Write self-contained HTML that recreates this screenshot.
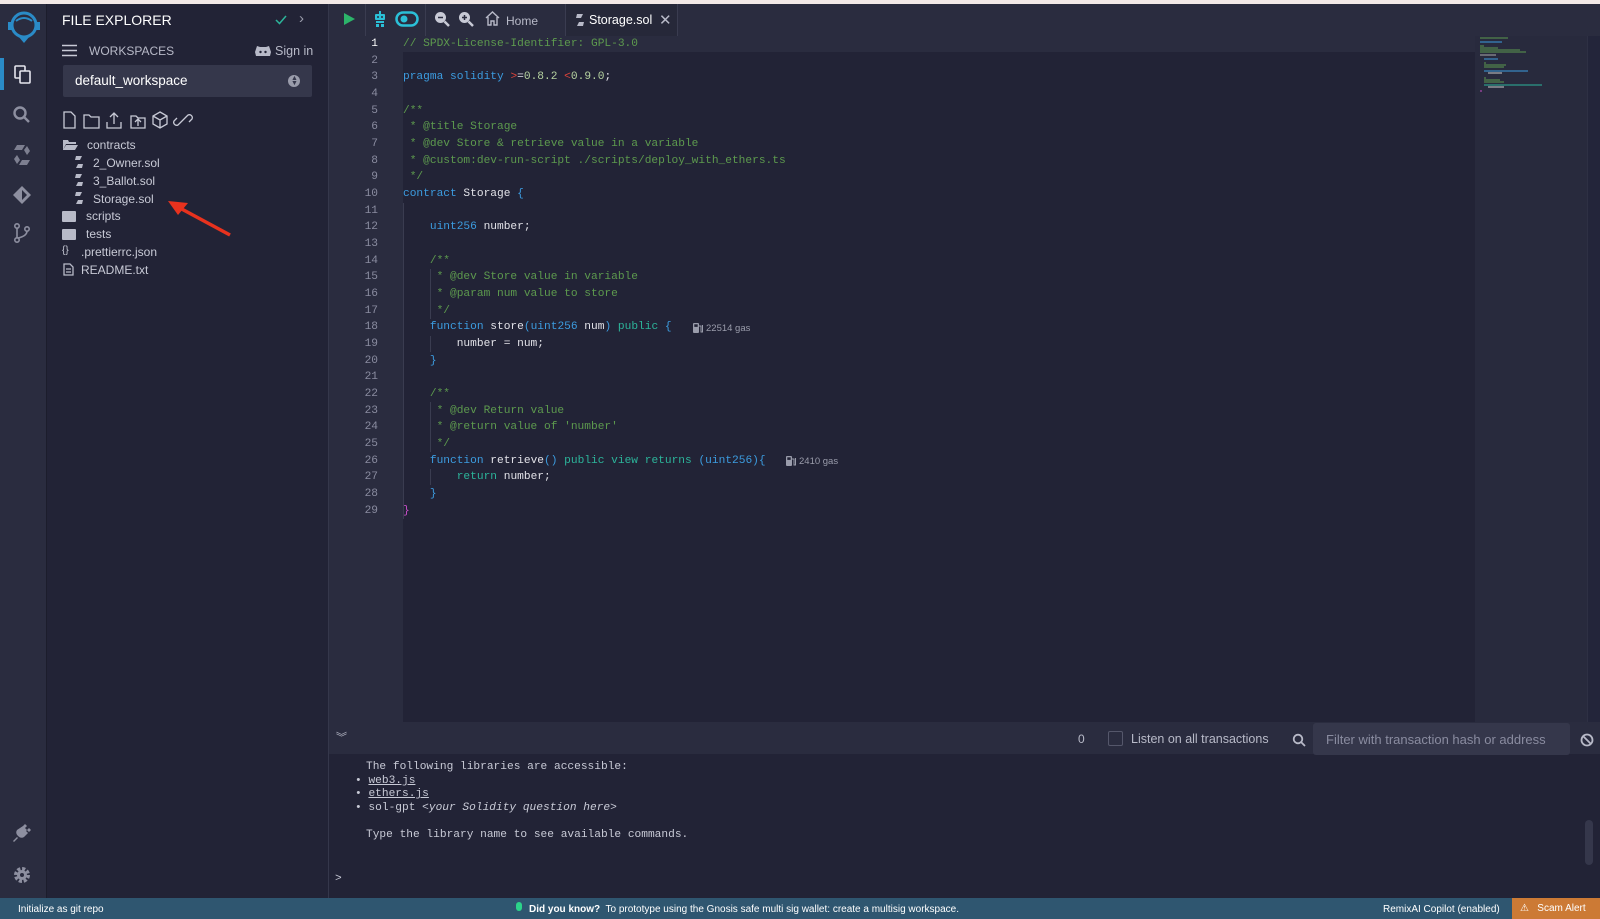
<!DOCTYPE html>
<html><head><meta charset="utf-8"><style>
*{margin:0;padding:0;box-sizing:border-box}
body{width:1600px;height:919px;overflow:hidden;background:#222336;font-family:"Liberation Sans",sans-serif;color:#c8cad6;position:relative}
.a{position:absolute}
.topb{left:0;top:0;width:1600px;height:4px;background:#f3e9e7}
.ib{left:0;top:4px;width:47px;height:894px;background:#2a2c3f;border-right:1px solid #1c1d2c}
.sp{left:47px;top:4px;width:282px;height:894px;background:#222336;border-right:1px solid #35374b}
.tb{left:329px;top:4px;width:1271px;height:32px;background:#2a2c3f}
.gut{left:329px;top:36px;width:74px;height:686px;background:#2a2c3f}
.ln{position:absolute;left:329px;width:49px;text-align:right;font-size:11.2px;color:#8a8ca0;font-family:"Liberation Mono",monospace;line-height:16.67px}
.cl{position:absolute;left:403px;font-size:11.2px;font-family:"Liberation Mono",monospace;line-height:16.67px;white-space:pre;color:#e2e2e8}
.c{color:#5d9a4e}.k{color:#3c9ce0}.g{color:#2cb49a}.n{color:#b6d3a0}.r{color:#e0443a}.m{color:#c84fc8}
.gas{font-family:"Liberation Sans",sans-serif;font-size:9.5px;color:#9a9cab}
.tree{position:absolute;font-size:12px;color:#c8cad6}
.term{left:329px;top:722px;width:1271px;height:32px;background:#2a2c3f}
.tt{position:absolute;left:366px;font-size:11.2px;font-family:"Liberation Mono",monospace;color:#c8cad6;white-space:pre}
.sb{left:0;top:898px;width:1600px;height:21px;background:#2f5670;font-size:10px;color:#fff}
</style></head><body>
<div class="a topb"></div>
<div class="a ib"></div>
<div class="a sp"></div>
<div class="a tb"></div>
<div class="a gut"></div>
<div class="a" style="left:403px;top:36px;width:1072px;height:16px;background:#2a2c3f"></div>
<div class="a" style="left:1475px;top:36px;width:112px;height:686px;background:#282a3d"></div>
<div class="a" style="left:1587px;top:36px;width:13px;height:686px;background:#23253a;border-left:1px solid #2e3044"></div>
<svg class="a" style="left:1478px;top:36px" width="100" height="60">
<g stroke-width="1">
<line x1="2" y1="2" x2="30" y2="2" stroke="#5d9a4e"/><line x1="2" y1="6" x2="24" y2="6" stroke="#3c9ce0"/>
<line x1="2" y1="10" x2="6" y2="10" stroke="#5d9a4e"/><line x1="2" y1="12" x2="20" y2="12" stroke="#5d9a4e"/><line x1="2" y1="14" x2="42" y2="14" stroke="#5d9a4e"/><line x1="2" y1="16" x2="48" y2="16" stroke="#5d9a4e"/>
<line x1="2" y1="19" x2="18" y2="19" stroke="#aaa"/><line x1="6" y1="23" x2="20" y2="23" stroke="#3c9ce0"/>
<line x1="6" y1="27" x2="8" y2="27" stroke="#5d9a4e"/><line x1="6" y1="29" x2="28" y2="29" stroke="#5d9a4e"/><line x1="6" y1="31" x2="26" y2="31" stroke="#5d9a4e"/>
<line x1="6" y1="35" x2="50" y2="35" stroke="#3c9ce0"/><line x1="10" y1="37" x2="24" y2="37" stroke="#ccc"/>
<line x1="6" y1="42" x2="8" y2="42" stroke="#5d9a4e"/><line x1="6" y1="44" x2="22" y2="44" stroke="#5d9a4e"/><line x1="6" y1="46" x2="26" y2="46" stroke="#5d9a4e"/>
<line x1="6" y1="49" x2="64" y2="49" stroke="#2cb49a"/><line x1="10" y1="51" x2="26" y2="51" stroke="#ccc"/><line x1="2" y1="55" x2="4" y2="55" stroke="#c84fc8"/>
</g></svg>

<svg class="a" style="left:4px;top:8px" width="40" height="40" viewBox="0 0 40 40">
<circle cx="20" cy="17" r="12" fill="none" stroke="#2a8bc7" stroke-width="3"/>
<path d="M6 14 v8 M34 14 v8" stroke="#2a8bc7" stroke-width="4"/>
<path d="M14 28 L20 35 L26 28 Z" fill="#2a8bc7"/>
<path d="M12 13 q8 -6 16 0" stroke="#2a8bc7" stroke-width="2" fill="none"/>
</svg>
<div class="a" style="left:0;top:58px;width:4px;height:32px;background:#2a8bc7"></div>
<svg class="a" style="left:12px;top:63px" width="22" height="22" viewBox="0 0 22 22" fill="none" stroke="#e6e6ee" stroke-width="1.6">
<rect x="3" y="3" width="10" height="12" rx="1"/><rect x="8" y="8" width="10" height="12" rx="1" fill="#2a2c3f"/></svg>
<svg class="a" style="left:12px;top:105px" width="20" height="20" viewBox="0 0 20 20" fill="none" stroke="#8d8fa0" stroke-width="2.4"><circle cx="8" cy="8" r="5.5"/><path d="M12 12 L17 17"/></svg>
<svg class="a" style="left:13px;top:144px" width="18" height="22" viewBox="0 0 18 22" fill="#7d7f90"><path d="M4 1 h8 l-3 5 h-8 z M14 2 l3 5 l-3 4 l-3 -5 z M4 20 l-3 -5 l3 -4 l3 5 z M14 21 h-8 l3 -5 h8 z"/></svg>
<svg class="a" style="left:11px;top:184px" width="22" height="22" viewBox="0 0 22 22" fill="#8d8fa0"><path d="M11 2 L20 11 L11 20 L2 11 Z"/><path d="M11 6 L16 11 L11 16 Z" fill="#2a2c3f"/></svg>
<svg class="a" style="left:12px;top:222px" width="20" height="22" viewBox="0 0 20 22" fill="none" stroke="#8d8fa0" stroke-width="1.6"><circle cx="5" cy="4" r="2.2"/><circle cx="5" cy="18" r="2.2"/><circle cx="15" cy="7" r="2.2"/><path d="M5 6 v10 M15 9 q0 5 -9 7"/></svg>
<svg class="a" style="left:11px;top:822px" width="22" height="22" viewBox="0 0 22 22" fill="#8d8fa0"><path d="M12 4 l6 6 l-5 5 q-3 2 -6 -1 q-3 -3 -1 -6 z M14 2 l2 2 l-3 3 l-2 -2 z M20 8 l-2 -2 l-3 3 l2 2 z M6 15 l-4 4 l1 1 l4 -4z"/></svg>
<svg class="a" style="left:12px;top:865px" width="20" height="20" viewBox="0 0 20 20"><circle cx="10" cy="10" r="6" fill="none" stroke="#8d8fa0" stroke-width="4" stroke-dasharray="3 1.7"/><circle cx="10" cy="10" r="5" fill="#8d8fa0"/><circle cx="10" cy="10" r="2" fill="#2a2c3f"/></svg>

<div class="a" style="left:62px;top:12px;font-size:14px;color:#fff">FILE EXPLORER</div>
<svg class="a" style="left:275px;top:14px" width="12" height="12" viewBox="0 0 12 12" fill="none" stroke="#2cb49a" stroke-width="1.5"><path d="M1 6 l3.5 3.5 L11 2"/></svg>
<div class="a" style="left:299px;top:10px;font-size:15px;color:#9a9cab">›</div>
<svg class="a" style="left:62px;top:44px" width="16" height="13"><path d="M0 1.5 h15 M0 6.5 h15 M0 11.5 h15" stroke="#c8cad6" stroke-width="1.6"/></svg>
<div class="a" style="left:89px;top:44px;font-size:12px;color:#b8bac8">WORKSPACES</div>
<svg class="a" style="left:255px;top:45px" width="16" height="12" viewBox="0 0 16 12"><path d="M2 1 l3 1 h6 l3 -1 l2 6 l-1 4 h-14 l-1 -4 z" fill="#b8bac8"/><circle cx="5.5" cy="7" r="1.2" fill="#222336"/><circle cx="10.5" cy="7" r="1.2" fill="#222336"/></svg>
<div class="a" style="left:275px;top:44px;font-size:12.5px;color:#b8bac8">Sign in</div>
<div class="a" style="left:63px;top:65px;width:249px;height:32px;background:#35374b;border-radius:2px"></div>
<div class="a" style="left:75px;top:73px;font-size:13.5px;color:#fff">default_workspace</div>
<div class="a" style="left:288px;top:75px;width:12px;height:12px;border-radius:6px;background:#9a9cab"></div>
<div class="a" style="left:291px;top:76px;font-size:7px;color:#35374b;line-height:5px">▲<br>▼</div>
<svg class="a" style="left:62px;top:110px" width="140" height="20" viewBox="0 0 140 20" fill="none" stroke="#c8cad6" stroke-width="1.3">
<path d="M2 2 h7 l4 4 v12 h-11 z"/>
<path d="M22 5 h5 l2 2 h8 v11 h-15 z"/>
<path d="M45 12 v6 h14 v-6 M52 3 v11 M48 7 l4 -4 l4 4"/>
<path d="M69 6 h5 l2 2 h7 v10 h-14 z M76 16 v-6 M73 12 l3 -3 l3 3"/>
<path d="M98 2 l7 4 v8 l-7 4 l-7 -4 v-8 z M91 6 l7 4 l7 -4 M98 10 v8"/>
<path d="M119 12 l-3 3 a3 3 0 0 1 -4 -4 l3 -3 M123 8 l3 -3 a3 3 0 0 1 4 4 l-3 3 M118 13 l7 -7"/>
</svg>
<svg class="a" style="left:62px;top:139px" width="16" height="12"><path d="M1 1 h5 l1 2 h7 v2 h-10 l-3 6 z M4 6 h12 l-3 5 h-12 z" fill="#b8bac8"/></svg>
<div class="tree" style="left:87px;top:138px">contracts</div>
<svg class="a" style="left:75px;top:156px" width="8" height="12" viewBox="0 0 8 12" fill="#b8bac8"><path d="M1 0 h6 l-2 4 h-5 z M7 12 h-6 l2 -4 h5 z"/></svg><div class="tree" style="left:93px;top:156px">2_Owner.sol</div>
<svg class="a" style="left:75px;top:174px" width="8" height="12" viewBox="0 0 8 12" fill="#b8bac8"><path d="M1 0 h6 l-2 4 h-5 z M7 12 h-6 l2 -4 h5 z"/></svg><div class="tree" style="left:93px;top:174px">3_Ballot.sol</div>
<svg class="a" style="left:75px;top:192px" width="8" height="12" viewBox="0 0 8 12" fill="#b8bac8"><path d="M1 0 h6 l-2 4 h-5 z M7 12 h-6 l2 -4 h5 z"/></svg><div class="tree" style="left:93px;top:192px">Storage.sol</div>
<div class="a" style="left:62px;top:211px;width:14px;height:11px;background:#b8bac8;border-radius:1px"></div><div class="tree" style="left:86px;top:209px">scripts</div>
<div class="a" style="left:62px;top:229px;width:14px;height:11px;background:#b8bac8;border-radius:1px"></div><div class="tree" style="left:86px;top:227px">tests</div>
<div class="tree" style="left:62px;top:245px;font-size:10px">{}</div><div class="tree" style="left:81px;top:245px">.prettierrc.json</div>
<svg class="a" style="left:63px;top:263px" width="11" height="13" fill="none" stroke="#b8bac8" stroke-width="1.3"><path d="M1 1 h6 l3 3 v8 h-9 z M3 6 h5 M3 9 h5"/></svg>
<div class="tree" style="left:81px;top:263px">README.txt</div>
<svg class="a" style="left:160px;top:195px" width="80" height="45"><path d="M70 40 L18 12" stroke="#e8321e" stroke-width="3.5"/><path d="M8 6 L28 8 L18 20 Z" fill="#e8321e"/></svg>

<div class="a" style="left:365px;top:4px;width:1px;height:32px;background:#3a3c50"></div>
<div class="a" style="left:425px;top:4px;width:1px;height:32px;background:#3a3c50"></div>
<div class="a" style="left:565px;top:4px;width:113px;height:32px;background:#262839;border-left:1px solid #3a3c50;border-right:1px solid #3a3c50"></div>
<svg class="a" style="left:343px;top:12px" width="13" height="14"><path d="M1 1 L12 7 L1 13 Z" fill="#2cb46a"/></svg>
<svg class="a" style="left:372px;top:11px" width="16" height="16" viewBox="0 0 16 16" fill="#2bc0d8"><rect x="3" y="3" width="10" height="6" rx="1"/><rect x="7" y="0" width="2" height="3"/><rect x="4" y="10" width="8" height="2"/><rect x="4" y="13" width="3" height="3"/><rect x="9" y="13" width="3" height="3"/><circle cx="6" cy="6" r="1" fill="#2a2c3f"/><circle cx="10" cy="6" r="1" fill="#2a2c3f"/></svg>
<svg class="a" style="left:395px;top:11px" width="24" height="16"><rect x="1.5" y="1.5" width="21" height="13" rx="6.5" fill="none" stroke="#2bc0d8" stroke-width="2.5"/><circle cx="9" cy="8" r="3.5" fill="#2bc0d8"/></svg>
<svg class="a" style="left:434px;top:11px" width="16" height="16" viewBox="0 0 16 16"><circle cx="6.5" cy="6.5" r="5.5" fill="#c8cad6"/><path d="M10.5 10.5 L15 15" stroke="#c8cad6" stroke-width="2.5"/><path d="M4 6.5 h5" stroke="#2a2c3f" stroke-width="1.5"/></svg>
<svg class="a" style="left:458px;top:11px" width="16" height="16" viewBox="0 0 16 16"><circle cx="6.5" cy="6.5" r="5.5" fill="#c8cad6"/><path d="M10.5 10.5 L15 15" stroke="#c8cad6" stroke-width="2.5"/><path d="M4 6.5 h5 M6.5 4 v5" stroke="#2a2c3f" stroke-width="1.5"/></svg>
<svg class="a" style="left:485px;top:11px" width="15" height="15" viewBox="0 0 15 15" fill="none" stroke="#b8bac8" stroke-width="1.4"><path d="M1 7 L7.5 1 L14 7 M3 6 v8 h3 v-4 h3 v4 h3 v-8"/></svg>
<div class="a" style="left:506px;top:14px;font-size:12px;color:#b8bac8">Home</div>
<svg class="a" style="left:576px;top:14px" width="8" height="12" viewBox="0 0 8 12" fill="#b8bac8"><path d="M1 0 h6 l-2 4 h-5 z M7 12 h-6 l2 -4 h5 z"/></svg>
<div class="a" style="left:589px;top:13px;font-size:12.5px;color:#fff">Storage.sol</div>
<div class="a" style="left:659px;top:11px;font-size:15px;color:#b8bac8">✕</div>

<div class="ln" style="top:36px;color:#fff">1</div><div class="ln" style="top:52.7px">2</div><div class="ln" style="top:69.3px">3</div><div class="ln" style="top:86px">4</div><div class="ln" style="top:102.7px">5</div><div class="ln" style="top:119.3px">6</div><div class="ln" style="top:136px">7</div><div class="ln" style="top:152.7px">8</div><div class="ln" style="top:169.3px">9</div><div class="ln" style="top:186px">10</div><div class="ln" style="top:202.7px">11</div><div class="ln" style="top:219.3px">12</div><div class="ln" style="top:236px">13</div><div class="ln" style="top:252.7px">14</div><div class="ln" style="top:269.3px">15</div><div class="ln" style="top:286px">16</div><div class="ln" style="top:302.7px">17</div><div class="ln" style="top:319.3px">18</div><div class="ln" style="top:336px">19</div><div class="ln" style="top:352.7px">20</div><div class="ln" style="top:369.3px">21</div><div class="ln" style="top:386px">22</div><div class="ln" style="top:402.7px">23</div><div class="ln" style="top:419.3px">24</div><div class="ln" style="top:436px">25</div><div class="ln" style="top:452.7px">26</div><div class="ln" style="top:469.3px">27</div><div class="ln" style="top:486px">28</div><div class="ln" style="top:502.7px">29</div>

<div class="cl c" style="top:36px">// SPDX-License-Identifier: GPL-3.0</div>
<div class="cl" style="top:69.3px"><span class="k">pragma solidity</span> <span class="r">&gt;</span>=<span class="n">0.8.2</span> <span class="r">&lt;</span><span class="n">0.9.0</span>;</div>
<div class="cl c" style="top:102.7px">/**</div>
<div class="cl c" style="top:119.3px"> * @title Storage</div>
<div class="cl c" style="top:136px"> * @dev Store &amp; retrieve value in a variable</div>
<div class="cl c" style="top:152.7px"> * @custom:dev-run-script ./scripts/deploy_with_ethers.ts</div>
<div class="cl c" style="top:169.3px"> */</div>
<div class="cl" style="top:186px"><span class="k">contract</span> Storage <span class="k">{</span></div>
<div class="cl" style="top:219.3px">    <span class="k">uint256</span> number;</div>
<div class="cl c" style="top:252.7px">    /**</div>
<div class="cl c" style="top:269.3px">     * @dev Store value in variable</div>
<div class="cl c" style="top:286px">     * @param num value to store</div>
<div class="cl c" style="top:302.7px">     */</div>
<div class="cl" style="top:319.3px">    <span class="k">function</span> store<span class="k">(uint256</span> num<span class="k">)</span> <span class="g">public</span> <span class="k">{</span></div>
<div class="cl" style="top:336px">        number = num;</div>
<div class="cl k" style="top:352.7px">    }</div>
<div class="cl c" style="top:386px">    /**</div>
<div class="cl c" style="top:402.7px">     * @dev Return value</div>
<div class="cl c" style="top:419.3px">     * @return value of 'number'</div>
<div class="cl c" style="top:436px">     */</div>
<div class="cl" style="top:452.7px">    <span class="k">function</span> retrieve<span class="k">()</span> <span class="g">public view returns</span> <span class="k">(uint256){</span></div>
<div class="cl" style="top:469.3px">        <span class="g">return</span> number;</div>
<div class="cl k" style="top:486px">    }</div>
<div class="cl m" style="top:502.7px">}</div>
<svg class="a" style="left:693px;top:323px" width="10" height="10" viewBox="0 0 10 10" fill="#9a9cab"><rect x="0" y="0" width="6" height="10" rx="1"/><rect x="1.3" y="1.3" width="3.4" height="2.6" fill="#222336"/><path d="M6 3 h2 v6 h1.5 v-7" stroke="#9a9cab" fill="none"/></svg>
<div class="a gas" style="left:706px;top:323px">22514 gas</div>
<svg class="a" style="left:786px;top:456px" width="10" height="10" viewBox="0 0 10 10" fill="#9a9cab"><rect x="0" y="0" width="6" height="10" rx="1"/><rect x="1.3" y="1.3" width="3.4" height="2.6" fill="#222336"/><path d="M6 3 h2 v6 h1.5 v-7" stroke="#9a9cab" fill="none"/></svg>
<div class="a gas" style="left:799px;top:456px">2410 gas</div>
<div class="a" style="left:403px;top:203px;width:1px;height:316px;background:#3a3c50"></div>
<div class="a" style="left:430px;top:269px;width:1px;height:50px;background:#3a3c50"></div>
<div class="a" style="left:430px;top:336px;width:1px;height:16px;background:#3a3c50"></div>
<div class="a" style="left:430px;top:402px;width:1px;height:50px;background:#3a3c50"></div>
<div class="a" style="left:430px;top:469px;width:1px;height:16px;background:#3a3c50"></div>

<div class="a term"></div>
<div class="a" style="left:336px;top:729px;font-size:11px;color:#b8bac8">︾</div>
<div class="a" style="left:1078px;top:732px;font-size:12px;color:#b8bac8">0</div>
<div class="a" style="left:1108px;top:731px;width:15px;height:15px;border:1px solid #55576b;border-radius:2px"></div>
<div class="a" style="left:1131px;top:732px;font-size:12.5px;color:#b8bac8">Listen on all transactions</div>
<svg class="a" style="left:1292px;top:733px" width="14" height="14" fill="none" stroke="#b8bac8" stroke-width="1.8"><circle cx="6" cy="6" r="4.3"/><path d="M9 9 L13 13"/></svg>
<div class="a" style="left:1313px;top:723px;width:257px;height:32px;background:#35374b;border-radius:3px"></div>
<div class="a" style="left:1326px;top:732px;font-size:13px;color:#8a8ca0">Filter with transaction hash or address</div>
<svg class="a" style="left:1580px;top:733px" width="14" height="14" fill="none" stroke="#b8bac8" stroke-width="1.8"><circle cx="7" cy="7" r="5.5"/><path d="M3 3 L11 11"/></svg>
<div class="tt" style="left:366px;top:761px">The following libraries are accessible:</div>
<div class="tt" style="left:355px;top:775px">• <u>web3.js</u></div>
<div class="tt" style="left:355px;top:788px">• <u>ethers.js</u></div>
<div class="tt" style="left:355px;top:802px">• sol-gpt <i>&lt;your Solidity question here&gt;</i></div>
<div class="tt" style="left:366px;top:829px">Type the library name to see available commands.</div>
<div class="tt" style="left:335px;top:873px">&gt;</div>
<div class="a" style="left:1585px;top:820px;width:8px;height:45px;background:#35374b;border-radius:4px"></div>

<div class="a sb">
<div class="a" style="left:18px;top:6px">Initialize as git repo</div>
<div class="a" style="left:516px;top:4px;width:6px;height:9px;border-radius:3px;background:#2cd48a"></div>
<div class="a" style="left:529px;top:6px"><b>Did you know?</b>&nbsp; To prototype using the Gnosis safe multi sig wallet: create a multisig workspace.</div>
<div class="a" style="left:1383px;top:6px">RemixAI Copilot (enabled)</div>
<div class="a" style="left:1512px;top:0;width:88px;height:21px;background:#cc7a35"></div>
<div class="a" style="left:1520px;top:5px">⚠&nbsp;&nbsp; Scam Alert</div>
</div>
</body></html>
